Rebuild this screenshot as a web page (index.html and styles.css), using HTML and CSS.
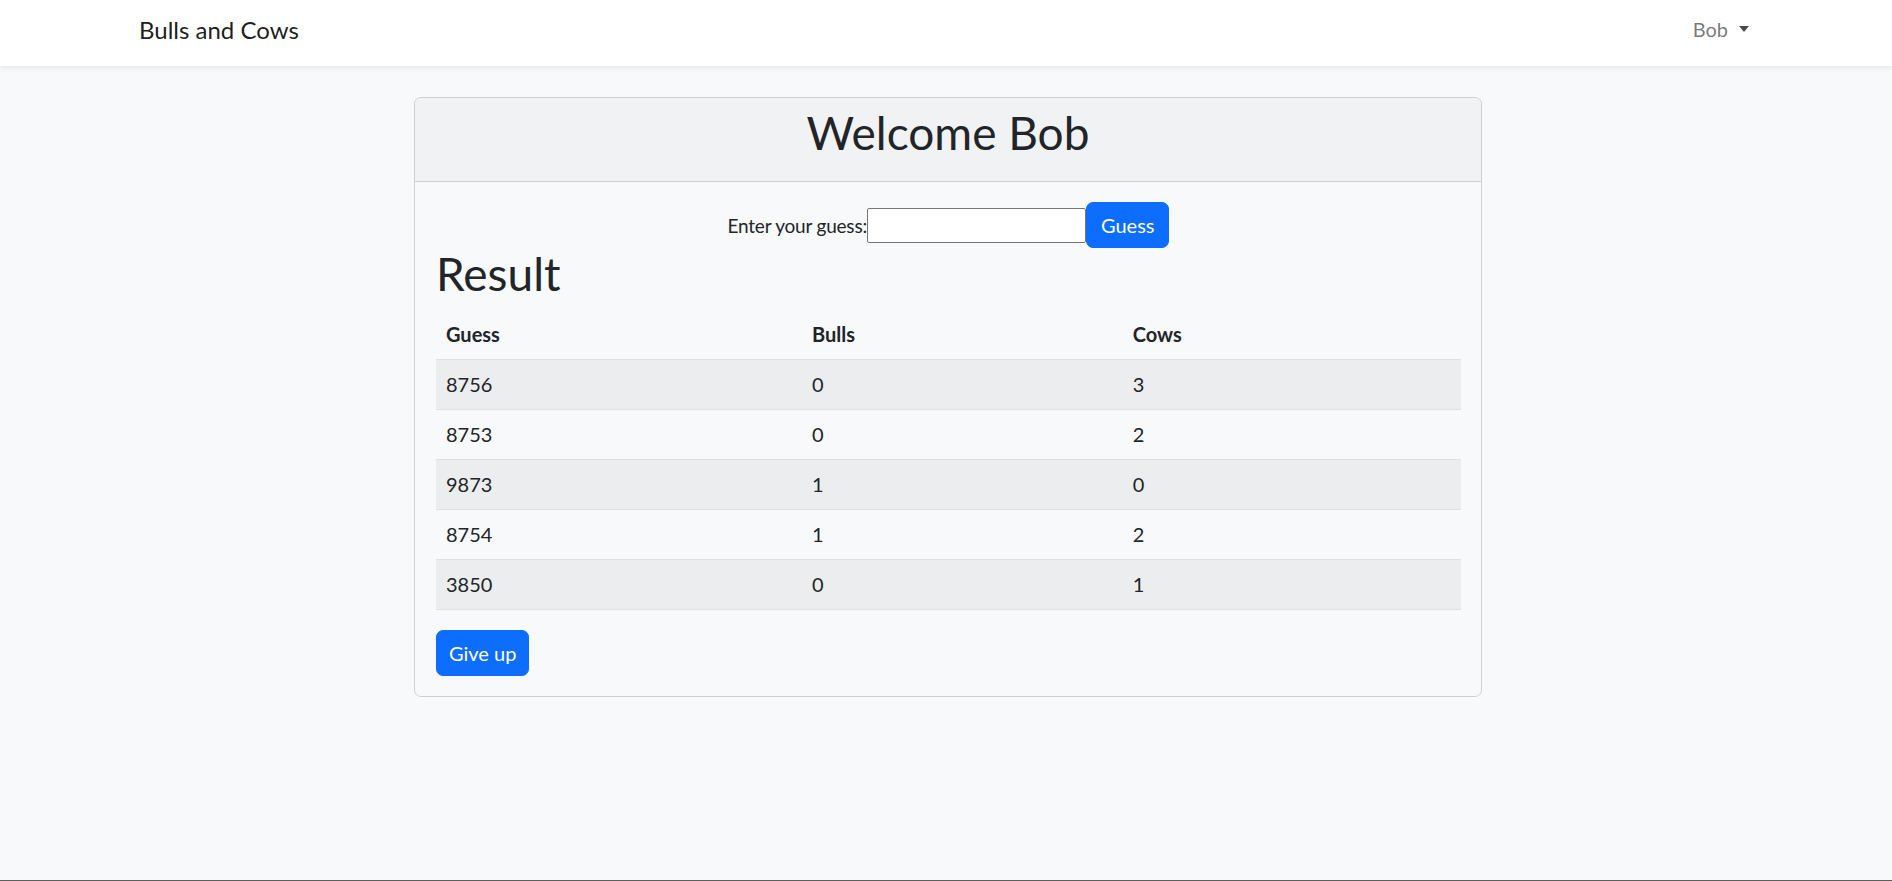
FILE: index.html
```html
<!DOCTYPE html>
<html lang="en">
<head>
<meta charset="utf-8">
<title>Bulls and Cows</title>
<link rel="stylesheet" href="styles.css">
</head>
<body>
<div class="page">
  <nav class="navbar">
    <div class="nav-container">
      <a class="brand" href="#">Bulls and Cows</a>
      <a class="user-toggle" href="#">Bob<span class="caret"></span></a>
    </div>
  </nav>
  <main class="main">
    <div class="card">
      <div class="card-header">
        <h1 class="title">Welcome Bob</h1>
      </div>
      <div class="card-body">
        <form class="guess-form">
          <label class="guess-label" for="guess">Enter your guess:</label>
          <input class="guess-input" id="guess" type="text">
          <button class="btn" type="button">Guess</button>
        </form>
        <h1 class="title title-result">Result</h1>
        <table class="results">
          <thead>
            <tr><th class="col-guess">Guess</th><th class="col-bulls">Bulls</th><th>Cows</th></tr>
          </thead>
          <tbody>
            <tr><td>8756</td><td>0</td><td>3</td></tr>
            <tr><td>8753</td><td>0</td><td>2</td></tr>
            <tr><td>9873</td><td>1</td><td>0</td></tr>
            <tr><td>8754</td><td>1</td><td>2</td></tr>
            <tr><td>3850</td><td>0</td><td>1</td></tr>
          </tbody>
        </table>
        <button class="btn btn-giveup" type="button">Give up</button>
      </div>
    </div>
  </main>
  <div class="bottom-rule"></div>
</div>
</body>
</html>
```

FILE: styles.css
```css
* { box-sizing: border-box; }

html, body {
  margin: 0;
  padding: 0;
}

body {
  background: #f8f9fa;
  color: #212529;
  font-family: "Lato", "Noto Sans", sans-serif;
  font-size: 20px;
  line-height: 30px;
}

.page {
  min-height: 100vh;
  display: flex;
  flex-direction: column;
}

.main {
  flex: 1;
}

.bottom-rule {
  height: 1px;
  background: #5c5c5c;
}

/* Navbar */
.navbar {
  background: #ffffff;
  height: 66px;
  box-shadow: 0 2px 5px rgba(0, 0, 0, 0.075);
  position: relative;
  z-index: 1;
}

.nav-container {
  max-width: 1650px;
  margin: 0 auto;
  padding: 0 15px;
  height: 100%;
  display: flex;
  justify-content: space-between;
  align-items: flex-start;
}

.brand {
  margin-top: 12px;
  margin-left: 3px;
  font-size: 24px;
  line-height: 36px;
  color: rgba(0, 0, 0, 0.9);
  text-decoration: none;
}

.user-toggle {
  margin-top: 14px;
  padding-right: 7px;
  font-size: 20px;
  line-height: 30px;
  color: rgba(0, 0, 0, 0.55);
  text-decoration: none;
  display: flex;
  align-items: center;
}

.caret {
  display: inline-block;
  margin-left: 11px;
  width: 0;
  height: 0;
  border-top: 6px solid rgba(0, 0, 0, 0.7);
  border-left: 5px solid transparent;
  border-right: 5px solid transparent;
}

/* Card */
.card {
  width: 1068px;
  margin: 31px 0 0 calc(50% - 532px);
  border: 1px solid #cfd0d1;
  border-radius: 7px;
  background: #f8f9fa;
  overflow: hidden;
}

.card-header {
  background: #f1f2f3;
  border-bottom: 1px solid #cfd0d1;
  padding: 9px 20px 10px;
  text-align: center;
}

.title {
  margin: 0 0 12px;
  font-size: 46px;
  line-height: 52px;
  font-weight: 400;
  color: #212529;
}

.title-result {
  margin-bottom: 10px;
}

.card-body {
  padding: 20px 20px 20px 21px;
}

/* Guess form */
.guess-form {
  display: flex;
  justify-content: center;
  align-items: center;
  margin: 0;
}

.guess-label {
  font-size: 19px;
  letter-spacing: -0.2px;
  line-height: 30px;
  margin-top: 1px;
}

.guess-input {
  width: 219px;
  height: 35px;
  border: 1px solid #767676;
  border-radius: 2px;
  background: #ffffff;
  padding: 1px 2px;
  font: inherit;
}

.btn {
  display: inline-block;
  background: #0d6efd;
  color: #ffffff;
  border: 1px solid #0d6efd;
  border-radius: 7px;
  padding: 7px 14px;
  font-family: inherit;
  font-size: 20px;
  line-height: 30px;
  cursor: pointer;
}

.btn-giveup {
  padding: 7px 12px;
}

/* Table */
.results {
  width: 100%;
  border-collapse: collapse;
  margin-bottom: 20px;
}

.results th,
.results td {
  text-align: left;
  padding: 10px 10px;
  line-height: 29px;
  border-bottom: 1px solid #dee2e6;
}

.results th {
  font-weight: 700;
}

.col-guess { width: 35.7%; }
.col-bulls { width: 31.3%; }

.results tbody tr:nth-child(odd) td {
  background: #ecedee;
}
```
